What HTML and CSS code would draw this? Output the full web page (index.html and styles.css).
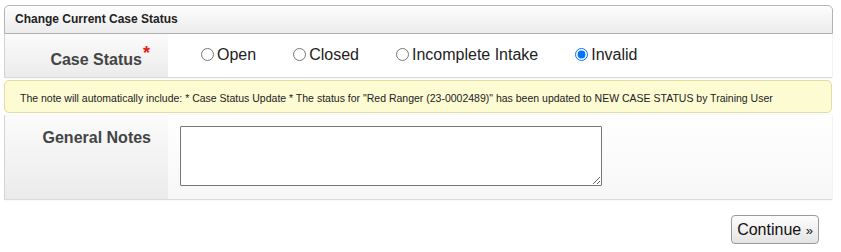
FILE: index.html
```html
<!DOCTYPE html>
<html lang="en">
<head>
    <meta charset="UTF-8">
    <title>Change Current Case Status</title>
    <link rel="stylesheet" href="styles.css">
</head>
<body>
    <div class="panel">
        <div class="panel-header">Change Current Case Status</div>

        <div class="form-row row-status">
            <div class="form-label">Case Status<span class="required">*</span></div>
            <div class="form-value radios">
                <label class="radio"><input type="radio" name="status">Open</label>
                <label class="radio"><input type="radio" name="status">Closed</label>
                <label class="radio"><input type="radio" name="status">Incomplete Intake</label>
                <label class="radio"><input type="radio" name="status" checked>Invalid</label>
            </div>
        </div>

        <div class="note">The note will automatically include: * Case Status Update * The status for "Red Ranger (23-0002489)" has been updated to NEW CASE STATUS by Training User</div>

        <div class="form-row row-notes">
            <div class="form-label">General Notes</div>
            <div class="form-value notes-value">
                <textarea class="notes"></textarea>
            </div>
        </div>

        <div class="actions">
            <button class="continue-btn">Continue <span class="raquo">&raquo;</span></button>
        </div>
    </div>
</body>
</html>
```

FILE: styles.css
```css
body {
    margin: 5px 8px 0 4px;
    font-family: "Liberation Sans", Arial, sans-serif;
    color: #222;
    background-color: #fff;
}
.panel {
    width: 829px;
}
.panel-header {
    height: 27px;
    line-height: 27px;
    padding-left: 10px;
    font-size: 12px;
    font-weight: bold;
    color: #222;
    border: 1px solid #b4b4b4;
    border-radius: 5px 5px 0 0;
    background: linear-gradient(#fdfdfd, #ececec);
}
.form-row {
    display: flex;
    width: 828px;
    border-left: 1px solid #d4d4d4;
    border-bottom: 1px solid #dadada;
    box-shadow: 1px 0 2px rgba(0,0,0,0.08);
    box-sizing: border-box;
}
.form-label {
    width: 163px;
    flex-shrink: 0;
    text-align: right;
    padding-right: 17px;
    box-sizing: border-box;
    font-size: 16px;
    font-weight: bold;
    color: #444;
    background: linear-gradient(#fbfbfb, #ebebeb);
}
.form-value {
    flex: 1;
}
.row-status {
    height: 44px;
}
.row-status .form-label {
    padding-top: 15px;
    padding-right: 18px;
}
.required {
    color: #e31b1b;
    font-size: 18px;
    position: relative;
    top: -6px;
    margin-left: 1px;
}
.radios {
    display: flex;
    align-items: center;
    padding-left: 30px;
    padding-bottom: 2px;
    background: #fff;
}
.radio {
    font-size: 16px;
    color: #222;
    display: flex;
    align-items: center;
    margin-right: 34px;
}
.radio input {
    width: 13px;
    height: 13px;
    margin: 0 3px 0 3px;
}
.note {
    margin: 2px 0 2px 0;
    width: 828px;
    height: 33px;
    box-sizing: border-box;
    padding: 11px 0 0 15px;
    font-size: 10.5px;
    color: #222;
    background-color: #fdfbd2;
    border: 1px solid #e2dca6;
    border-radius: 5px;
}
.row-notes {
    height: 85px;
}
.row-notes .form-label {
    padding-top: 14px;
}
.notes-value {
    padding: 11px 0 0 12px;
    background: linear-gradient(#fff, #f7f7f7);
}
.notes {
    width: 422px;
    height: 60px;
    box-sizing: border-box;
    border: 1px solid #767676;
    border-radius: 1px;
    margin: 0;
    display: block;
}
.actions {
    display: flex;
    justify-content: flex-end;
    padding: 15px 14px 0 0;
}
.continue-btn {
    font-family: "Liberation Sans", Arial, sans-serif;
    font-size: 16px;
    color: #111;
    width: 88px;
    height: 29px;
    padding: 0;
    border: 1px solid #9a9a9a;
    border-radius: 4px;
    background: linear-gradient(#fdfdfd, #e4e4e4);
}
.raquo {
    font-size: 13px;
}
```
